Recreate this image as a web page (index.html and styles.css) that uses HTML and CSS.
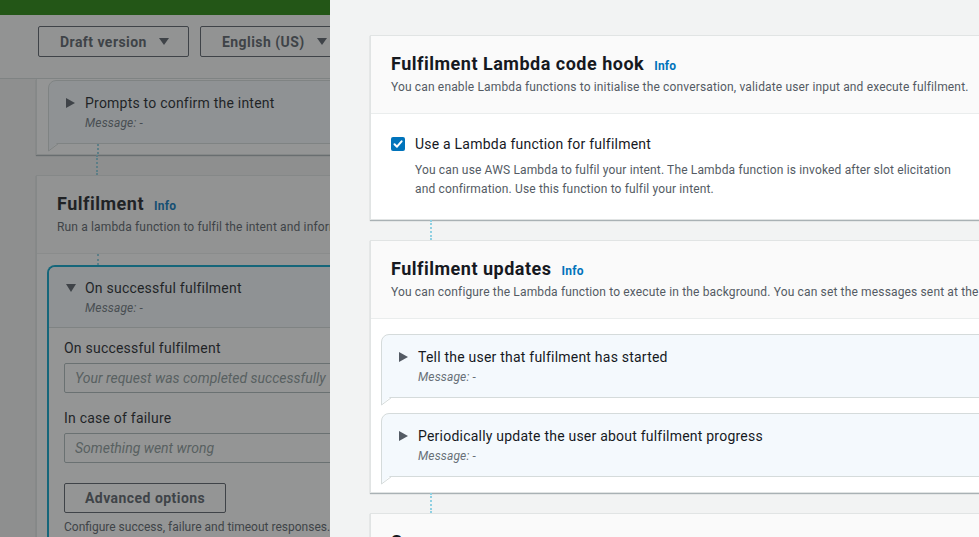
FILE: index.html
```html
<!DOCTYPE html>
<html lang="en">
<head>
<meta charset="utf-8">
<title>Fulfilment</title>
<link rel="stylesheet" href="styles.css">
</head>
<body>
<div class="screen">
  <div class="page">
    <div class="page-inner">
      <div class="flash"></div>
      <div class="toolbar">
        <button class="btn">Draft version <span class="caret-down"></span></button>
        <button class="btn">English (US) <span class="caret-down"></span></button>
      </div>
      <div class="page-content">
        <section class="card card-cut">
          <div class="card-body bubbles-cut">
            <div class="bubble">
              <span class="tri-right"></span>
              <div class="bubble-text">
                <div class="bubble-title">Prompts to confirm the intent</div>
                <div class="bubble-msg">Message: -</div>
              </div>
              <svg class="tail" width="12" height="9" viewBox="0 0 12 9"><polygon points="1,0 1,7 9,0" fill="#f4f9fd"/><polyline points="0.5,0 0.5,8 10.5,0.5" fill="none" stroke="#d5dbdb" stroke-width="1"/></svg>
            </div>
            <div class="conn conn-in conn-short"></div>
          </div>
        </section>
        <div class="conn"></div>
        <section class="card">
          <header class="card-head">
            <div class="title-row"><h2 class="card-title">Fulfilment</h2><a class="info">Info</a></div>
            <p class="card-desc">Run a lambda function to fulfil the intent and inform the user of the outcome.</p>
          </header>
          <div class="card-body expand-wrap">
            <div class="conn conn-in conn-mid"></div>
            <div class="expand">
              <div class="expand-head">
                <span class="tri-down"></span>
                <div class="bubble-text">
                  <div class="bubble-title">On successful fulfilment</div>
                  <div class="bubble-msg">Message: -</div>
                </div>
              </div>
              <div class="expand-body">
                <label class="field-label">On successful fulfilment</label>
                <input class="field-input" type="text" placeholder="Your request was completed successfully">
                <label class="field-label field-gap">In case of failure</label>
                <input class="field-input" type="text" placeholder="Something went wrong">
                <button class="btn btn-adv">Advanced options</button>
                <p class="hint">Configure success, failure and timeout responses.</p>
              </div>
            </div>
          </div>
        </section>
      </div>
    </div>
    <div class="dim"></div>
  </div>

  <aside class="panel">
    <section class="card">
      <header class="card-head">
        <div class="title-row"><h2 class="card-title">Fulfilment Lambda code hook</h2><a class="info">Info</a></div>
        <p class="card-desc">You can enable Lambda functions to initialise the conversation, validate user input and execute fulfilment.</p>
      </header>
      <div class="card-body check-body">
        <label class="check-row">
          <span class="checkbox"><svg width="14" height="14" viewBox="0 0 14 14"><polyline points="3.5,7.2 6,9.7 10.6,4.3" fill="none" stroke="#fff" stroke-width="2" stroke-linecap="round" stroke-linejoin="round"/></svg></span>
          <span class="check-label">Use a Lambda function for fulfilment</span>
        </label>
        <p class="check-desc">You can use AWS Lambda to fulfil your intent. The Lambda function is invoked after slot elicitation and confirmation. Use this function to fulfil your intent.</p>
      </div>
    </section>
    <div class="conn"></div>
    <section class="card">
      <header class="card-head">
        <div class="title-row"><h2 class="card-title">Fulfilment updates</h2><a class="info">Info</a></div>
        <p class="card-desc nowrap">You can configure the Lambda function to execute in the background. You can set the messages sent at the start and during fulfilment.</p>
      </header>
      <div class="card-body bubbles">
        <div class="bubble">
          <span class="tri-right"></span>
          <div class="bubble-text">
            <div class="bubble-title">Tell the user that fulfilment has started</div>
            <div class="bubble-msg">Message: -</div>
          </div>
          <svg class="tail" width="12" height="9" viewBox="0 0 12 9"><polygon points="1,0 1,7 9,0" fill="#f4f9fd"/><polyline points="0.5,0 0.5,8 10.5,0.5" fill="none" stroke="#d5dbdb" stroke-width="1"/></svg>
        </div>
        <div class="bubble">
          <span class="tri-right"></span>
          <div class="bubble-text">
            <div class="bubble-title">Periodically update the user about fulfilment progress</div>
            <div class="bubble-msg">Message: -</div>
          </div>
          <svg class="tail" width="12" height="9" viewBox="0 0 12 9"><polygon points="1,0 1,7 9,0" fill="#f4f9fd"/><polyline points="0.5,0 0.5,8 10.5,0.5" fill="none" stroke="#d5dbdb" stroke-width="1"/></svg>
        </div>
      </div>
    </section>
    <div class="conn"></div>
    <section class="card">
      <header class="card-head">
        <div class="title-row"><h2 class="card-title">Success responses</h2><a class="info">Info</a></div>
        <p class="card-desc">Configure the responses that are sent to the user after fulfilment.</p>
      </header>
    </section>
  </aside>
</div>
</body>
</html>
```

FILE: styles.css
```css
* { box-sizing: border-box; }

html, body {
  margin: 0;
  padding: 0;
}

body {
  width: 979px;
  height: 537px;
  overflow: hidden;
  font-family: Roboto, "Noto Sans", "Liberation Sans", sans-serif;
  color: #16191f;
  background: #f2f3f3;
}

.screen {
  display: flex;
  height: 537px;
  overflow: hidden;
}

/* ---------- underlying page (dimmed) ---------- */
.page {
  position: relative;
  flex: none;
  width: 330px;
  overflow: hidden;
  background: #f2f3f3;
}

.page-inner {
  width: 720px;
}

.dim {
  position: absolute;
  inset: 0;
  background: rgba(42, 44, 44, 0.5);
}

.flash {
  height: 15px;
  background: #1d8102;
}

.toolbar {
  display: flex;
  align-items: flex-start;
  gap: 11px;
  height: 64px;
  padding: 11px 0 0 38px;
  background: #fafafa;
  border-bottom: 1px solid #d5dbdb;
}

.btn {
  display: flex;
  align-items: center;
  height: 31px;
  padding: 0 19px 0 21px;
  border: 1px solid #545b64;
  border-radius: 2px;
  background: transparent;
  font-family: inherit;
  font-size: 14px;
  font-weight: 700;
  letter-spacing: 0.45px;
  color: #545b64;
  white-space: nowrap;
}

.caret-down {
  width: 0;
  height: 0;
  margin-left: 12px;
  border-left: 5px solid transparent;
  border-right: 5px solid transparent;
  border-top: 7px solid #545b64;
}

.page-content {
  padding-left: 36px;
}

/* ---------- cards ---------- */
.card {
  width: 640px;
  background: #fff;
  border: 1px solid #e1e4e4;
  box-shadow: 0 1px 1px 0 rgba(0, 28, 36, 0.3);
}

.card-cut {
  border-top: 0;
}

.card-head {
  padding: 17px 20px 18px;
  background: #fafafa;
  border-bottom: 1px solid #eaeded;
}

.title-row {
  display: flex;
  align-items: baseline;
  gap: 10px;
  height: 22px;
}

.card-title {
  margin: 0;
  font-size: 18px;
  line-height: 22px;
  font-weight: 700;
  letter-spacing: 0.5px;
  color: #16191f;
  white-space: nowrap;
}

.info {
  font-size: 12px;
  font-weight: 700;
  letter-spacing: 0.2px;
  color: #0073bb;
  text-decoration: none;
}

.card-desc {
  margin: 4px 0 0;
  font-size: 12px;
  line-height: 16px;
  letter-spacing: 0.15px;
  color: #545b64;
}

.nowrap {
  white-space: nowrap;
}

/* ---------- connectors ---------- */
.conn {
  width: 0;
  height: 20px;
  margin-left: 60px;
  border-left: 2px dotted #8fd0e2;
}

.conn-in {
  margin-left: 49px;
}

.conn-short {
  height: 10px;
}

.conn-mid {
  height: 11px;
  margin-left: 50px;
}

/* ---------- bubbles ---------- */
.bubbles-cut {
  padding: 1px 0 0 11px;
}

.bubbles {
  display: flex;
  flex-direction: column;
  gap: 15px;
  padding: 15px 0 15px 10px;
}

.bubble {
  position: relative;
  display: flex;
  align-items: flex-start;
  gap: 10px;
  padding: 12px 17px 12px;
  border: 1px solid #d5dbdb;
  border-radius: 8px 8px 8px 0;
  background: #f4f9fd;
}

.tail {
  position: absolute;
  left: -1px;
  bottom: -9px;
  overflow: visible;
}

.tri-right {
  flex: none;
  width: 0;
  height: 0;
  margin-top: 5px;
  border-top: 5px solid transparent;
  border-bottom: 5px solid transparent;
  border-left: 9px solid #545b64;
}

.tri-down {
  flex: none;
  width: 0;
  height: 0;
  margin-top: 6px;
  border-left: 5px solid transparent;
  border-right: 5px solid transparent;
  border-top: 8px solid #545b64;
}

.bubble-title {
  font-size: 14px;
  line-height: 20px;
  letter-spacing: 0.22px;
  color: #16191f;
  white-space: nowrap;
}

.bubble-msg {
  margin-top: 2px;
  font-size: 12px;
  line-height: 16px;
  font-style: italic;
  letter-spacing: 0.15px;
  color: #687078;
}

/* ---------- expanded container (left page) ---------- */
.expand-wrap {
  padding-left: 10px;
}

.expand {
  border: 2px solid #00a1c9;
  border-bottom: 0;
  border-radius: 8px 8px 0 0;
  background: #fff;
  overflow: hidden;
}

.expand-head {
  display: flex;
  align-items: flex-start;
  gap: 9px;
  padding: 11px 17px 11px;
  background: #f4f9fd;
  border-bottom: 1px solid #d5dbdb;
}

.expand-body {
  display: flex;
  flex-direction: column;
  align-items: flex-start;
  padding: 10px 15px 20px;
}

.field-label {
  font-size: 14px;
  line-height: 20px;
  letter-spacing: 0.22px;
  color: #16191f;
}

.field-gap {
  margin-top: 15px;
}

.field-input {
  width: 500px;
  height: 30px;
  margin-top: 5px;
  padding: 0 10px;
  border: 1px solid #aab7b8;
  border-radius: 2px;
  background: #fff;
  font-family: inherit;
  font-size: 14px;
  letter-spacing: 0;
}

.field-input::placeholder {
  font-style: italic;
  color: #879596;
}

.btn-adv {
  height: 30px;
  margin-top: 20px;
  padding: 0 20px;
}

.hint {
  margin: 6px 0 0;
  font-size: 12px;
  line-height: 16px;
  letter-spacing: 0;
  color: #545b64;
  white-space: nowrap;
}

/* ---------- side panel ---------- */
.panel {
  flex: 1;
  min-width: 0;
  overflow: hidden;
  padding: 35px 0 0 40px;
  background: #f2f3f3;
}

.check-body {
  padding: 20px 20px 20px;
}

.check-row {
  display: flex;
  align-items: center;
  gap: 10px;
  height: 20px;
}

.checkbox {
  display: block;
  width: 14px;
  height: 14px;
  border-radius: 2px;
  background: #0073bb;
}

.checkbox svg {
  display: block;
}

.check-label {
  font-size: 14px;
  line-height: 20px;
  letter-spacing: 0.22px;
  color: #16191f;
}

.check-desc {
  max-width: 545px;
  margin: 7px 0 0 24px;
  font-size: 12px;
  line-height: 19px;
  letter-spacing: 0.15px;
  color: #545b64;
}
```
